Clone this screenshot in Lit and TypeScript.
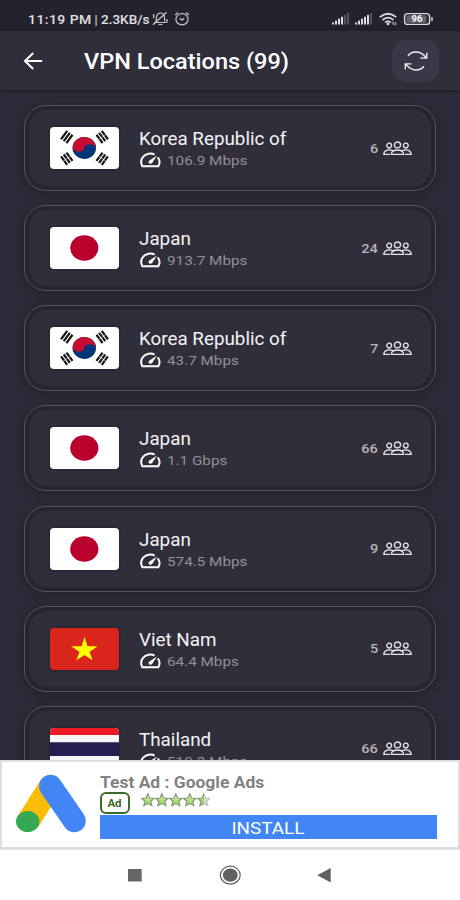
import { LitElement, html, css, svg } from "lit";
import { customElement, property } from "lit/decorators.js";

type Place = { country: string; flag: string; speed: string; sessions: number };

const places: Place[] = [
  { country: "Korea Republic of", flag: "kr", speed: "106.9 Mbps", sessions: 6 },
  { country: "Japan", flag: "jp", speed: "913.7 Mbps", sessions: 24 },
  { country: "Korea Republic of", flag: "kr", speed: "43.7 Mbps", sessions: 7 },
  { country: "Japan", flag: "jp", speed: "1.1 Gbps", sessions: 66 },
  { country: "Japan", flag: "jp", speed: "574.5 Mbps", sessions: 9 },
  { country: "Viet Nam", flag: "vn", speed: "64.4 Mbps", sessions: 5 },
  { country: "Thailand", flag: "th", speed: "510.3 Mbps", sessions: 66 },
];

const trigram = (x: number, y: number, angle: number, broken: boolean) => svg`
  <g transform="translate(${x} ${y}) rotate(${angle})" stroke="#151515" stroke-width="2.2">
    <path d="M-5.2-3.3H5.2M-5.2 0H5.2M-5.2 3.3H5.2"/>
    ${broken ? svg`<path d="M0-4.4V4.4" stroke="#fff" stroke-width=".5"/>` : null}
  </g>`;

const flags: Record<string, unknown> = {
  kr: svg`
    <rect width="69" height="42" fill="#fff"/>
    <g transform="translate(34.3 21) scale(1.05 .97) rotate(8)">
      <circle r="11.2" fill="#003478"/>
      <path d="M-11.2 0A11.2 11.2 0 0 1 11.2 0A5.6 4.6 0 0 0 0 0A5.6 4.6 0 0 1-11.2 0Z" fill="#c60c30"/>
    </g>
    ${trigram(16.8, 10, -54, false)}${trigram(52.2, 10, 54, true)}
    ${trigram(16.8, 31.7, 54, true)}${trigram(52.2, 31.7, -54, true)}`,
  jp: svg`<rect width="69" height="42" fill="#fff"/><ellipse cx="34.3" cy="21" rx="14.1" ry="12.8" fill="#bc002d"/>`,
  vn: svg`<rect width="69" height="42" fill="#da251d"/>
    <path d="M34.5 9L37.5 18.2H47.6L39.5 24L42.6 32.3L34.5 27L26.3 32.3L29.5 24L21.3 18.2H31.5Z" fill="#ff0"/>`,
  th: svg`<rect width="69" height="42" fill="#f4f5f8"/><path d="M0 0H69V7H0ZM0 35H69V42H0Z" fill="#ed1c24"/><path d="M0 14.3H69V28H0Z" fill="#241d4f"/>`,
};

@customElement("location-card")
class LocationCard extends LitElement {
  @property({ attribute: false }) place!: Place;

  static styles = css`
    :host { display: block; }
    .card {
      box-sizing: border-box;
      height: 86px;
      padding: 4px;
      border: 1px solid #575562;
      border-radius: 22px;
      background: #272533;
      box-shadow: 0 2px 9px 1px #24222d;
    }
    .inner {
      box-sizing: border-box;
      height: 76px;
      display: flex;
      align-items: center;
      padding: 0 19px 0 21px;
      border-radius: 18px;
      background: #302e3b;
    }
    .flag { display: block; width: 69px; height: 42px; border-radius: 4px; box-shadow: 0 0 3px #1c1b26; }
    .copy { flex: 1; margin-left: 20px; padding-top: 2px; white-space: nowrap; }
    .name { font-size: 17.5px; line-height: 22px; color: #f3f3f5; transform: scaleX(1.075); transform-origin: left; }
    .speed { display: flex; align-items: center; gap: 6px; height: 20px; font-size: 13.5px; color: #929095; }
    .speed span { transform: scaleX(1.13); transform-origin: left; }
    .gauge { width: 22px; height: 16px; display: block; }
    .sessions { display: flex; align-items: center; gap: 5px; font-size: 13px; font-weight: 500; color: #b7b3b6; }
    .sessions span { transform: scaleX(1.12); transform-origin: right; }
    .people { display: block; width: 29px; height: 15px; }
  `;

  render() {
    const { country, flag, speed, sessions } = this.place;
    return html`<div class="card"><div class="inner">
      <svg class="flag" viewBox="0 0 69 42">${flags[flag]}</svg>
      <div class="copy">
        <div class="name">${country}</div>
        <div class="speed">
          <svg class="gauge" viewBox="0 0 22 16" fill="none" stroke="#fff" stroke-width="2">
            <path d="M15.6 2.6C11.8.7 6.8 1.5 4.2 4.7C1.8 7.5 1.7 11.2 3.4 14.2H19.3C21 11.3 21 7.9 18.7 5.3"/>
            <path d="M18 3.6L13.1 10.9C11.6 12.7 8.2 11 10.1 8.7Z" fill="#fff" stroke="none"/>
          </svg>
          <span>${speed}</span>
        </div>
      </div>
      <div class="sessions">
        <span>${sessions}</span>
        <svg class="people" viewBox="0 0 29 15" fill="none" stroke="#e6e4e9" stroke-width="1.3" stroke-linejoin="round">
          <ellipse cx="14.5" cy="3.9" rx="3.1" ry="2.9"/>
          <path d="M8.3 13.3C8.6 10.7 11 9 14.5 9S20.4 10.7 20.7 13.3Z"/>
          <circle cx="6.2" cy="4.6" r="2.4"/><circle cx="22.8" cy="4.6" r="2.4"/>
          <path d="M10 9.8C6.2 7.9 1.3 9 .7 13.3H7M19 9.8C22.8 7.9 27.7 9 28.3 13.3H22"/>
        </svg>
      </div>
    </div></div>`;
  }
}

@customElement("app-root")
class AppRoot extends LitElement {
  static styles = css`
    :host {
      display: flex;
      flex-direction: column;
      width: 460px;
      height: 900px;
      overflow: hidden;
      background: #2d2b39;
      font-family: Roboto, "Liberation Sans", sans-serif;
    }
    svg { display: block; flex: none; }
    .status {
      flex: none;
      box-sizing: border-box;
      height: 31px;
      padding: 8px 26px 0 28px;
      display: flex;
      justify-content: space-between;
      background: #23222d;
      color: #e1e0e4;
    }
    .clock { display: flex; align-items: center; height: 22px; font-size: 12.5px; font-weight: 500; white-space: nowrap; }
    .clock span { transform-origin: left; }
    .time { width: 63px; letter-spacing: 0.4px; transform: scaleX(1.12); }
    .bar { width: 10px; text-align: center; font-weight: 400; }
    .rate { width: 51px; transform: scaleX(1.08); }
    .header {
      flex: none;
      position: relative;
      box-sizing: border-box;
      height: 59px;
      padding: 0 21px 0 22px;
      display: flex;
      align-items: center;
      background: #302e3b;
      box-shadow: 0 1px 5px #1d1b26;
    }
    .title { flex: 1; margin: 0; padding-top: 1px; font-size: 21.5px; font-weight: 500; color: #fff; white-space: nowrap; }
    .title span { display: inline-block; margin-left: 40px; transform: scaleX(1.094); transform-origin: left; }
    .refresh { width: 47px; height: 42px; display: grid; place-items: center; border-radius: 13px; background: #393849; }
    .list {
      flex: 1;
      min-height: 0;
      box-sizing: border-box;
      padding: 15px 24px 0;
      display: flex;
      flex-direction: column;
      gap: 14.15px;
      overflow: hidden;
    }
    .list > * { flex: none; }
    .ad {
      flex: none;
      box-sizing: border-box;
      height: 90px;
      padding: 9px 21.5px 0 10.5px;
      display: flex;
      gap: 14px;
      border: solid #dedede;
      border-width: 2px 2px 3px;
      background: #fff;
    }
    .adcopy { flex: 1; }
    .adname { height: 20px; margin-left: 0.5px; font-size: 16px; line-height: 23px; font-weight: 700; color: #828282; white-space: nowrap; transform: scaleX(1.09); transform-origin: left; }
    .adrow { display: flex; gap: 11px; height: 24px; }
    .tag {
      box-sizing: border-box;
      width: 30px;
      height: 22px;
      margin-top: 1px;
      border: 2px solid #3c6b2b;
      border-radius: 6px;
      font-size: 11.5px;
      line-height: 18px;
      font-weight: 700;
      text-align: center;
      color: #38672a;
    }
    .stars { margin-top: 1.5px; }
    .install { height: 24px; line-height: 26px; background: #4285f4; color: #fff; font-size: 17px; text-align: center; }
    .install span { display: inline-block; transform: scaleX(1.11); }
    .nav { flex: none; height: 50px; background: #fff; }
  `;

  private signal(level: number) {
    return svg`${[0, 1, 2, 3, 4, 5].map(
      (i) => svg`<rect x=${i * 3} y=${9.5 - i * 1.9} width="2" height=${2 + i * 1.9} fill=${i < level ? "#dddce0" : "#55545d"}/>`,
    )}`;
  }

  private star(i: number) {
    const d = "M6.8 .8L8.7 5L13 5.4L9.8 8.3L10.9 12.6L6.8 10.5L2.8 12.6L3.8 8.3L.6 5.4L4.9 5Z";
    return svg`<g transform="translate(${i * 14} 0)">
      <path d=${d} fill=${i === 4 ? "url(#half)" : "url(#full)"} stroke=${i === 4 ? "url(#edge)" : "#849477"} stroke-width="1.1"/>
    </g>`;
  }

  render() {
    return html`
      <div class="status">
        <div class="clock">
          <span class="time">11:19 PM</span><span class="bar">|</span><span class="rate">2.3KB/s</span>
          <svg width="38" height="16" viewBox="0 0 38 16" fill="none" stroke="#c9c8cd" stroke-width="1.2">
            <path d="M2 11.5H13.8M3.8 11.5C4.5 9.5 4 7 4.6 5.2C5.3 2.8 7 2 8.5 2S12 3 12.3 5.2L12.8 10.5M6.5 13.5H10.3M1 13.8L14.6 1.2M1.6 3V7M15 8V12"/>
            <ellipse cx="30" cy="8.3" rx="6.1" ry="5.6"/><path d="M27.8 7.3L30 9.2L32.2 7.3M23.2 4L26 1.5M34 1.5L36.8 4"/>
          </svg>
        </div>
        <svg width="104" height="22" viewBox="330 8 104 22">
          <g transform="translate(332 13)">${this.signal(4)}</g>
          <g transform="translate(355 13)">${this.signal(5)}</g>
          <g fill="none" stroke="#dddce0" stroke-width="1.7">
            <path d="M379.8 17.2Q388 10.3 396.2 17.2M382.5 20Q388 15.4 393.5 20M385.2 22.5Q388 20.3 390.8 22.5"/>
          </g>
          <circle cx="388" cy="24" r="1.3" fill="#dddce0"/>
          <path d="M393.3 25V22L392 23.3M395.3 22V25L396.6 23.8" fill="none" stroke="#c9c8cd" stroke-width=".9"/>
          <rect x="404.6" y="13.6" width="25" height="10.8" rx="3" fill="none" stroke="#dddce0" stroke-width="1.4"/>
          <rect x="406.5" y="15.3" width="20" height="7.4" rx="1" fill="#65646d"/>
          <path d="M432 17V21" stroke="#dddce0" stroke-width="1.4"/>
          <text x="417" y="22" text-anchor="middle" font-size="8.5" font-weight="700" fill="#fff" textLength="11" lengthAdjust="spacingAndGlyphs">96</text>
        </svg>
      </div>
      <header class="header">
        <svg width="22" height="20" viewBox="0 0 22 20" fill="none" stroke="#fff" stroke-width="2"><path d="M20.2 10H3.2M11.2 2L3 10L11.2 18"/></svg>
        <h1 class="title"><span>VPN Locations (99)</span></h1>
        <div class="refresh">
          <svg width="24" height="20" viewBox="0 0 24 20" fill="none" stroke="#eeedf1" stroke-width="1.4">
            <path d="M4 4.7C8.2-.7 17.2-.3 22 6.8M22.7 1.7V7.1H16.5M20 15.3C15.8 20.7 6.8 20.3 2 13.2M1.3 18.3V12.9H7.5"/>
          </svg>
        </div>
      </header>
      <main class="list">${places.map((p) => html`<location-card .place=${p}></location-card>`)}</main>
      <section class="ad">
        <svg width="73" height="64" viewBox="12 771 73 64">
          <path d="M49.5 786L27 821.5" stroke="#fbbc04" stroke-width="23"/>
          <path d="M49.5 786.3L73.3 820.7" stroke="#4285f4" stroke-width="23" stroke-linecap="round"/>
          <ellipse cx="26.7" cy="821.5" rx="11.7" ry="10.6" fill="#34a853"/>
        </svg>
        <div class="adcopy">
          <div class="adname">Test Ad : Google Ads</div>
          <div class="adrow">
            <span class="tag">Ad</span>
            <svg class="stars" width="71" height="14" viewBox="0 0 71 14">
              <defs>
                <linearGradient id="full" x2="0" y2="1"><stop stop-color="#d9f5b8"/><stop offset="1" stop-color="#8fd050"/></linearGradient>
                <linearGradient id="half"><stop offset=".5" stop-color="#9ed75f"/><stop offset=".5" stop-color="#d9d9d9"/></linearGradient>
                <linearGradient id="edge"><stop offset=".5" stop-color="#849477"/><stop offset=".5" stop-color="#c5c5c5"/></linearGradient>
              </defs>
              ${[0, 1, 2, 3, 4].map((i) => this.star(i))}
            </svg>
          </div>
          <div class="install"><span>INSTALL</span></div>
        </div>
      </section>
      <svg class="nav" width="460" height="50" viewBox="0 850 460 50">
        <rect x="128" y="869" width="13.7" height="12.5" fill="#666"/>
        <ellipse cx="230.3" cy="875.2" rx="9.9" ry="9" fill="none" stroke="#5d5d5d" stroke-width="1.2"/>
        <ellipse cx="230.3" cy="875.2" rx="7.4" ry="6.6" fill="#606060"/>
        <path d="M330.7 868V882.4L317.3 875.3Z" fill="#606060"/>
      </svg>`;
  }
}
